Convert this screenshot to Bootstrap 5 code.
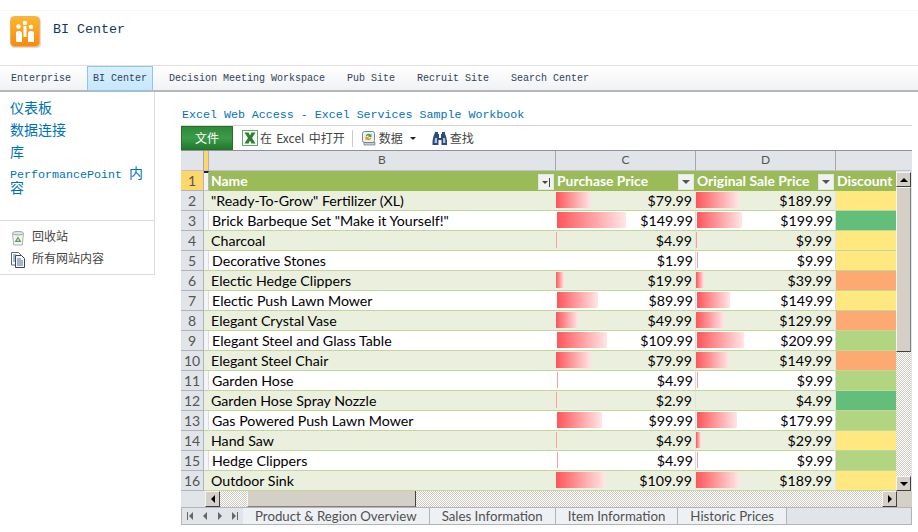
<!DOCTYPE html>
<html lang="en">
<head>
<meta charset="UTF-8">
<meta name="viewport" content="width=device-width, initial-scale=1.0">
<title>BI Center</title>
<link href="https://cdn.jsdelivr.net/npm/bootstrap@5.3.0/dist/css/bootstrap.min.css" rel="stylesheet">
<style>
html, body { height: 532px; overflow: hidden; }
body { background: #fff; font-family: "Liberation Mono", "Noto Sans CJK SC", monospace; color: #333; }
.top-strip { height: 11px; border-bottom: 1px solid #f6f6f6; }
.site-head { height: 55px; padding: 5px 0 0 10px; border-bottom: 1px solid #e2e2e2; }
.site-head-inner { gap: 12px; }
.site-name { font-size: 13.33px; color: #0c3a5e; line-height: 27px; }
.site-logo { width: 31px; height: 32px; display: block; }
.top-nav { height: 26px; background: linear-gradient(#fff, #f1f2f4); border-bottom: 2px solid #b4b7bb; padding-left: 5px; }
.top-nav a { font-size: 10px; color: #2f4358; text-decoration: none; padding: 0 5px; line-height: 23px; height: 25px; margin-right: 10px; border: 1px solid transparent; }
.top-nav a.current { background: linear-gradient(#d8efff, #c6e7fd); border-color: #8fc6ea; }
.side-bar { width: 155px; height: 183px; flex: none; border-right: 1px solid #dcdcdc; border-bottom: 1px solid #dcdcdc; padding-top: 6px; }
.side-link { display: block; padding-left: 10px; color: #0072bc; text-decoration: none; font-size: 14px; line-height: 22px; }
.side-link.perf { font-size: 11.67px; line-height: 14px; margin-top: 3px; padding-right: 8px; }
.perf-cjk { font-size: 14px; display: inline-block; line-height: 14px; }
.side-tools { margin-top: 23px; border-top: 1px solid #dcdcdc; padding: 6px 0 0 10px; }
.side-tools a { display: flex; align-items: center; gap: 6px; height: 22px; color: #444; font-size: 12px; text-decoration: none; }
.main-part { padding: 14px 0 0 26px; width: 757px; }
.part-title { font-size: 11.65px; color: #0072bc; line-height: 17px; padding-left: 1px; border-bottom: 1px solid #d8d8d8; height: 20px; }
.tool-row { height: 25px; border-bottom: 1px solid #8f9398; font-size: 12px; color: #444; font-family: "Noto Sans CJK SC", sans-serif; }
.file-btn { width: 52px; height: 24px; border: 1px solid #2a6e2a; background: linear-gradient(#2f8a3a, #3b9c48 50%, #217a2e); color: #fff; font-size: 12px; text-align: center; line-height: 22px; margin-right: 9px; }
.tool-item { display: flex; align-items: center; gap: 2px; }
.open-item { word-spacing: 1.5px; margin-right: 7px; }
.find-item { margin-left: 16px; }
.tool-sep { width: 1px; height: 17px; background: #c9ccd0; margin-right: 8px; }
.caret-mark { width: 0; height: 0; border: 3px solid transparent; border-top: 3px solid #222; border-bottom: 0; margin-left: 5px; }
.sheet-box { font-family: Lato, "Liberation Sans", sans-serif; background: #e1e4e8; }
.sheet { table-layout: fixed; width: 730px; border-collapse: separate; border-spacing: 0; margin: 0; color: #000; font-size: 14.2px; }
.sheet td, .sheet th { height: 20px; padding: 0 3px 0 2px; font-weight: 400; white-space: nowrap; overflow: hidden; line-height: 19px; border-bottom: 1px solid #c4d79b; }
.sheet .col-head th { background: #e1e4e8; color: #555; font-size: 12px; text-align: center; line-height: 18px; border-bottom: 1px solid #c0c3c7; border-right: 1px solid #a4a8ac; padding: 0 0 1px; }
.sheet .row-num { background: #e1e4e8; color: #555; text-align: center; padding: 0; font-size: 14px; border-bottom: 1px solid #b1b5b9; border-right: 1px solid #b1b5b9; }
.sheet .row-num.on { background: #fdd76a; }
.sheet .col-head .corner { background: #e1e4e8; }
.sheet .gutter { padding: 0; border-bottom: 1px solid #c4d79b; }
.sheet .col-head .gutter { background: #fdd76a; border-right: 1px solid #b1b5b9; }
.sheet .col-head .blank-head { border-right: 0; }
.title-row td { background: #9bbb59; color: #fff; border-bottom: 1px solid #9bbb59; position: relative; }
.title-row td.head-cell { font-weight: 700; font-size: 13.9px; padding-left: 1px; }
.title-row td.name-cell { padding-left: 2px; }
.sheet .title-row .gutter { background: #f2f3f4; border-top: 2px solid #222; border-right: 1px solid #b1b5b9; border-bottom: 1px solid #c4c7ca; }
.filter-btn { position: absolute; right: 2px; top: 3px; width: 16px; height: 16px; background: #f1f1f1; border: 1px solid #e4e8d8; display: flex; align-items: center; justify-content: center; gap: 1px; }
.filter-btn::before { content: ""; border: 4px solid transparent; border-top: 4px solid #555; border-bottom: 0; }
.filter-btn.sorted::before { border-width: 3px; border-bottom: 0; border-top-color: #444; }
.filter-btn.sorted::after { content: ""; width: 1px; height: 9px; background: #444; }
.band td { background: #ebf0de; }
.band .gutter { background: #ebf0de; }
.plain td { background: #fff; }
.sheet .plain .gutter { background: #f4f5f6; border-right: 1px solid #dcdcdc; }
.band td.name-cell { padding-left: 2px; }
.plain td.name-cell { padding-left: 3px; }
.sheet td.money { text-align: right; padding: 0 3px 0 0; border-right: 1px solid #e2e7d3; background-repeat: no-repeat; background-position: 0 1px; background-image: linear-gradient(to right, #ff555a, #ffe6e6); }
.sheet .plain td.money { padding-right: 2px; background-position: 1px 1px; border-right-color: #dcdcdc; }
.sheet td.d-y { background: #ffe880; } .sheet td.d-g { background: #63be7b; } .sheet td.d-l { background: #b1d580; } .sheet td.d-o { background: #fdaa72; }
.sheet td.scroll-cell { padding: 1px 0 0; border: 0; background: #e1e4e8; vertical-align: top; }
.v-scroll { width: 15px; height: 319px; display: flex; flex-direction: column; }
.dither { background-color: #eee; background-image: repeating-conic-gradient(#cfcbc3 0 25%, #fff 0 50%); background-size: 2px 2px; }
.scroll-btn { height: 15px; flex: none; background: #d4d0c8; border: 1px solid; border-color: #f5f4f0 #404040 #404040 #f5f4f0; display: flex; align-items: center; justify-content: center; }
.v-thumb { height: 165px; flex: none; background: #d4d0c8; border: 1px solid; border-color: #f5f4f0 #808080 #404040 #f5f4f0; }
.arrow-up { border: 4px solid transparent; border-bottom: 4px solid #000; border-top: 0; }
.arrow-down { border: 4px solid transparent; border-top: 4px solid #000; border-bottom: 0; }
.arrow-left { border: 4px solid transparent; border-right: 4px solid #000; border-left: 0; }
.arrow-right { border: 4px solid transparent; border-left: 4px solid #000; border-right: 0; }
.h-scroll { height: 16px; padding-left: 24px; background: #e1e4e8; }
.h-track { flex: 1; }
.h-thumb { width: 169px; margin-left: 27px; background: #d4d0c8; border-right: 1px solid #404040; border-bottom: 1px solid #808080; border-left: 1px solid #f5f4f0; }
.h-btn { width: 15px; background: #d4d0c8; border: 1px solid; border-color: #f5f4f0 #404040 #404040 #f5f4f0; display: flex; align-items: center; justify-content: center; }
.h-corner { width: 15px; background: #d4d0c8; }
.tab-row { height: 18px; background: #e1e4e8; border: 1px solid #b1b5b9; font-size: 13.25px; color: #50504e; }
.tab-nav { width: 61px; gap: 9px; padding-left: 5px; align-items: center; }
.tab-item { padding: 0 12px; line-height: 17px; background: #eef1f4; border-right: 1px solid #b1b5b9; }
</style>
</head>
<body>
<div class="top-strip"></div>
<div class="site-head">
  <div class="d-flex align-items-start site-head-inner">
    <svg class="site-logo" viewBox="0 0 31 32"><defs><linearGradient id="lg" x1="0" y1="0" x2="0" y2="1"><stop offset="0" stop-color="#ffb72c"/><stop offset="1" stop-color="#f78a0a"/></linearGradient></defs><rect x="1" y="1.500" width="30" height="30.500" rx="4" fill="#ddd"/><rect x="0.500" y="0.500" width="29" height="30" rx="4" fill="url(#lg)" stroke="#eeb066"/><path d="M6 17a3 2 0 0 1 6 0v9H6zM18 17a3 2 0 0 1 6 0v9h-6z" fill="#fff"/><rect x="13.500" y="10" width="3" height="11" fill="#fff"/><circle cx="8.500" cy="10.500" r="2.300" fill="#fff"/><circle cx="15" cy="7" r="2.300" fill="#fff"/><circle cx="21" cy="11" r="2.300" fill="#fff"/></svg>
    <span class="site-name">BI Center</span>
  </div>
</div>
<nav class="top-nav d-flex align-items-start">
  <a href="#">Enterprise</a><a href="#" class="current">BI Center</a><a href="#">Decision Meeting Workspace</a><a href="#">Pub Site</a><a href="#">Recruit Site</a><a href="#">Search Center</a>
</nav>
<div class="d-flex">
  <aside class="side-bar">
    <a class="side-link" href="#">仪表板</a>
    <a class="side-link" href="#">数据连接</a>
    <a class="side-link" href="#">库</a>
    <a class="side-link perf" href="#">PerformancePoint <span class="perf-cjk">内</span><span class="perf-cjk">容</span></a>
    <div class="side-tools">
      <a href="#"><svg width="16" height="16" viewBox="0 0 16 16"><path d="M2.500 3.500h11l-1.200 11.500H3.700z" fill="#f2f5f5" stroke="#a9b1b3"/><ellipse cx="8" cy="3.200" rx="5.500" ry="1.800" fill="#dfe4e4" stroke="#a0a8aa"/><path d="M8 6.500l3.400 5.500H4.600z" fill="#5f9a58"/><path d="M8 8.500l1.300 2.200H6.700z" fill="#dfe9d8"/></svg>回收站</a>
      <a href="#"><svg width="16" height="16" viewBox="0 0 16 16"><path d="M1.500 .5h7l2.500 2.500v10h-9.500z" fill="#fff" stroke="#5a6a7a"/><path d="M5.500 3.500h6l3 3v9h-9z" fill="#f4f7fa" stroke="#2f4a68"/><path d="M3 3h3M3 5h2M3 7h2M3 9h2M7 7h4M7 9h6M7 11h6M7 13h6" stroke="#56708c"/></svg>所有网站内容</a>
    </div>
  </aside>
  <main class="main-part">
    <div class="part-title">Excel Web Access - Excel Services Sample Workbook</div>
    <div class="tool-row d-flex align-items-center">
      <div class="file-btn">文件</div>
      <div class="tool-item open-item"><svg width="16" height="16" viewBox="0 0 16 16"><rect x="0.500" y="0.500" width="15" height="15" fill="#f6fbf6" stroke="#6aa56a"/><path d="M2.500 2.500h4l1.500 3 1.500-3h4l-3.500 5.500 3.500 5.500h-4L8 10.500l-1.500 3h-4l3.500-5.500z" fill="#2e7d32"/></svg><span>在 Excel 中打开</span></div>
      <div class="tool-sep"></div>
      <div class="tool-item"><svg width="16" height="16" viewBox="0 0 16 16"><rect x="1.500" y="1.500" width="12" height="11" rx="2" fill="#eef1f6" stroke="#7a869a"/><path d="M3 12.500h11V15H3z" fill="#c6ccd6" stroke="#6a768a" stroke-width=".7"/><path d="M4.500 6.500a3 3 0 0 1 5-2l1-1v3.500H7l1-1a1.800 1.800 0 0 0-2.500.5z" fill="#5f9e3a"/><path d="M10.500 7.500a3 3 0 0 1-5 2l-1 1V7H8l-1 1a1.800 1.800 0 0 0 2.500-.5z" fill="#d6a020"/></svg><span>数据</span><i class="caret-mark"></i></div>
      <div class="tool-item find-item"><svg width="16" height="15" viewBox="0 0 16 15"><path d="M3 1h3v2h1v4h2V3h1V1h3v2l1 2 1 5v4H9.500V9h-3v5H.500v-4l1-5 1-2z" fill="#2d4a78"/><path d="M3 7h2v5H2.500zM11 7h2l.5 5H11z" fill="#a9c6e6"/></svg><span>查找</span></div>
    </div>
    <div class="sheet-box">
      <table class="sheet">
        <colgroup><col style="width:23px"><col style="width:5px"><col style="width:347px"><col style="width:140px"><col style="width:140px"><col style="width:60px"><col style="width:15px"></colgroup>
        <tbody id="sheetBody"></tbody>
      </table>
      <div class="h-scroll d-flex">
        <div class="h-btn"><i class="arrow-left"></i></div>
        <div class="h-track dither d-flex"><div class="h-thumb"></div></div>
        <div class="h-btn"><i class="arrow-right"></i></div>
        <div class="h-corner"></div>
      </div>
      <div class="tab-row d-flex">
        <div class="tab-nav d-flex">
          <svg width="6" height="8" viewBox="0 0 6 8"><path d="M0 0h1v8H0zM6 0v8L2 4z" fill="#666"/></svg>
          <svg width="6" height="8" viewBox="0 0 6 8"><path d="M5 0v8L1 4z" fill="#666"/></svg>
          <svg width="6" height="8" viewBox="0 0 6 8"><path d="M1 0v8l4-4z" fill="#666"/></svg>
          <svg width="6" height="8" viewBox="0 0 6 8"><path d="M0 0v8l4-4zM5 0h1v8H5z" fill="#666"/></svg>
        </div>
        <div class="tab-item">Product &amp; Region Overview</div>
        <div class="tab-item">Sales Information</div>
        <div class="tab-item">Item Information</div>
        <div class="tab-item">Historic Prices</div>
      </div>
    </div>
  </main>
</div>
<script>
const rows = [
  ['"Ready-To-Grow" Fertilizer (XL)', '$79.99', 35, '$189.99', 43, 'y'],
  ['Brick Barbeque Set "Make it Yourself!"', '$149.99', 69, '$199.99', 45, 'g'],
  ['Charcoal', '$4.99', 1, '$9.99', 1, 'y'],
  ['Decorative Stones', '$1.99', 0, '$9.99', 1, 'y'],
  ['Electic Hedge Clippers', '$19.99', 8, '$39.99', 8, 'o'],
  ['Electic Push Lawn Mower', '$89.99', 41, '$149.99', 33, 'y'],
  ['Elegant Crystal Vase', '$49.99', 22, '$129.99', 28, 'o'],
  ['Elegant Steel and Glass Table', '$109.99', 50, '$209.99', 47, 'l'],
  ['Elegant Steel Chair', '$79.99', 35, '$149.99', 33, 'o'],
  ['Garden Hose', '$4.99', 1, '$9.99', 1, 'l'],
  ['Garden Hose Spray Nozzle', '$2.99', 1, '$4.99', 0, 'g'],
  ['Gas Powered Push Lawn Mower', '$99.99', 45, '$179.99', 40, 'l'],
  ['Hand Saw', '$4.99', 1, '$29.99', 5, 'y'],
  ['Hedge Clippers', '$4.99', 1, '$9.99', 1, 'l'],
  ['Outdoor Sink', '$109.99', 49, '$189.99', 43, 'y']
];
let html = '<tr class="col-head"><th class="corner"></th><th class="gutter"></th><th>B</th><th>C</th><th>D</th><th class="blank-head" colspan="2"></th></tr>';
html += '<tr class="title-row"><td class="row-num on">1</td><td class="gutter"></td><td class="head-cell name-cell">Name<span class="filter-btn sorted"></span></td><td class="head-cell">Purchase Price<span class="filter-btn"></span></td><td class="head-cell">Original Sale Price<span class="filter-btn"></span></td><td class="head-cell">Discount</td>' +
  '<td class="scroll-cell" rowspan="16"><div class="v-scroll"><div class="scroll-btn"><i class="arrow-up"></i></div><div class="v-thumb"></div><div class="dither flex-grow-1"></div><div class="scroll-btn"><i class="arrow-down"></i></div></div></td></tr>';
rows.forEach(function (r, i) {
  html += '<tr class="' + (i % 2 ? 'plain' : 'band') + '"><td class="row-num">' + (i + 2) + '</td><td class="gutter"></td><td class="name-cell">' + r[0].replace(/"/g, '&quot;') + '</td>' +
    '<td class="money" style="background-size:' + r[2] + 'px 16px">' + r[1] + '</td>' +
    '<td class="money" style="background-size:' + r[4] + 'px 16px">' + r[3] + '</td>' +
    '<td class="d-' + r[5] + '"></td></tr>';
});
document.getElementById('sheetBody').innerHTML = html;
</script>
<script src="https://cdn.jsdelivr.net/npm/bootstrap@5.3.0/dist/js/bootstrap.bundle.min.js"></script>
</body>
</html>
